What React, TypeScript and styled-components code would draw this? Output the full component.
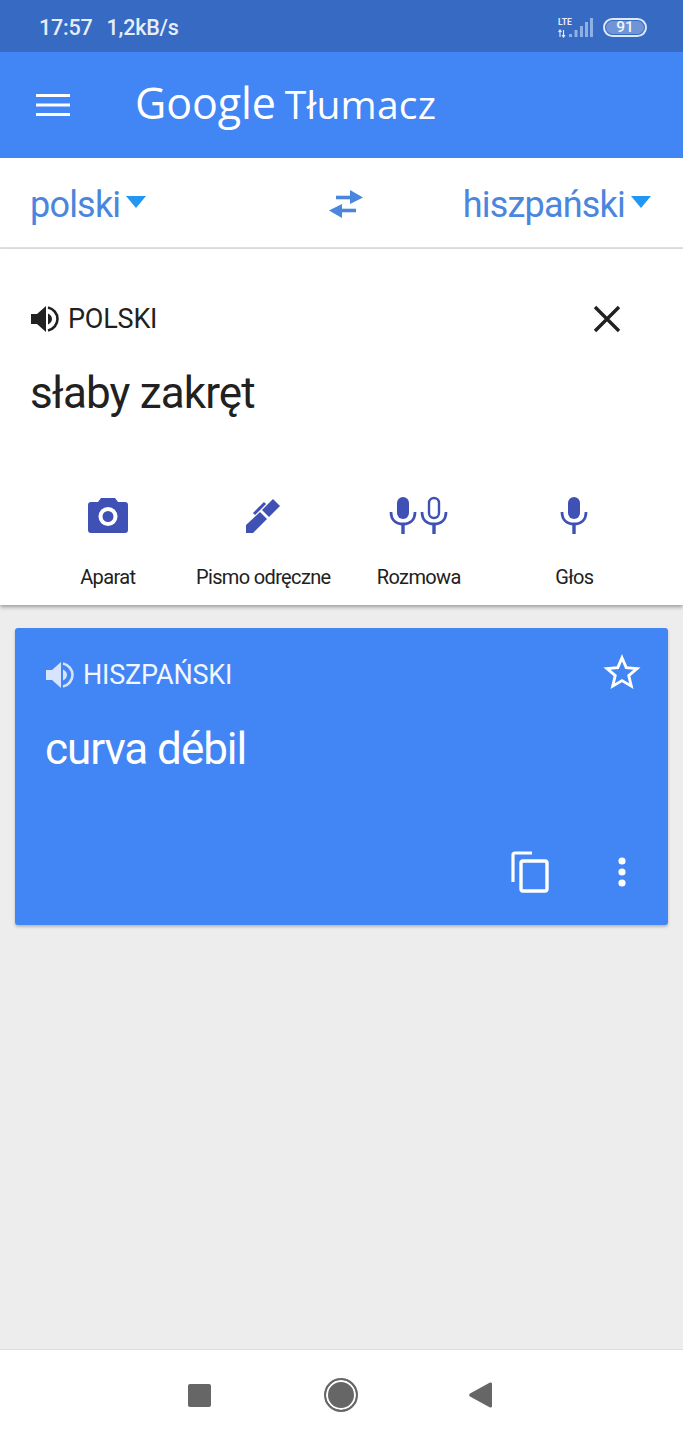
import React from "react";
import styled, { createGlobalStyle } from "styled-components";

const Global = createGlobalStyle`
  html, body { margin: 0; padding: 0; background: #ededed; }
  * { box-sizing: border-box; }
  body { font-family: Roboto, "Noto Sans", sans-serif; }
`;

const Page = styled.div`
  width: 683px;
  height: 1440px;
  display: flex;
  flex-direction: column;
  background: #ededed;
  overflow: hidden;
`;

const StatusBar = styled.div`
  height: 52px;
  flex: none;
  background: #366ac3;
  display: flex;
  align-items: center;
  justify-content: space-between;
  padding: 3px 36px 0 39px;
  color: #e6edf8;
`;

const StatusText = styled.div`
  display: flex;
  gap: 14px;
  font-size: 21.5px;
  font-weight: 500;
  letter-spacing: -0.2px;
`;

const StatusIcons = styled.div`
  display: flex;
  align-items: center;
  gap: 10px;
`;

const Battery = styled.div`
  width: 44px;
  height: 19px;
  border: 2px solid #dfe8f7;
  border-radius: 10px;
  padding: 1px;
  display: flex;
`;

const BatteryFill = styled.div`
  flex: 1;
  background: #6f95d6;
  border-radius: 7px;
  font-size: 15.5px;
  font-weight: 500;
  line-height: 13px;
  text-align: center;
  color: #f1f5fc;
`;

const AppBar = styled.header`
  height: 106px;
  flex: none;
  background: #4285f4;
  display: flex;
  align-items: center;
  padding: 0 0 0 36px;
  color: #fff;
`;

const Brand = styled.div`
  margin: -6px 0 0 65px;
  display: flex;
  align-items: baseline;
  gap: 9px;
`;

const BrandGoogle = styled.span`
  font-family: "Open Sans", sans-serif;
  font-size: 43px;
  font-weight: 500;
  letter-spacing: -0.1px;
  line-height: 1;
`;

const BrandName = styled.span`
  font-family: "Open Sans", sans-serif;
  font-size: 39px;
  font-weight: 500;
  letter-spacing: 0.2px;
  line-height: 1;
`;

const LangBar = styled.div`
  height: 91px;
  flex: none;
  background: #fff;
  border-bottom: 2px solid #e2e2e2;
  display: grid;
  grid-template-columns: 1fr auto 1fr;
  align-items: center;
  padding: 4px 32px 0 30px;
`;

const LangButton = styled.div<{ $end?: boolean }>`
  display: flex;
  align-items: center;
  gap: 6px;
  justify-content: ${(p) => (p.$end ? "flex-end" : "flex-start")};
  color: #4a86dd;
  font-size: 36px;
  letter-spacing: -0.8px;
`;

const Caret = styled.span`
  width: 0;
  height: 0;
  border-left: 10px solid transparent;
  border-right: 10px solid transparent;
  border-top: 12px solid #2196f3;
  margin-bottom: 6px;
`;

const SwapIcon = styled.svg`
  margin: -2px 0 0 10px;
`;

const InputPanel = styled.section`
  flex: none;
  height: 356px;
  background: #fff;
  box-shadow: 0 2px 4px rgba(0, 0, 0, 0.35);
  display: flex;
  flex-direction: column;
  padding: 0 0 0 30px;
`;

const LabelRow = styled.div`
  display: flex;
  align-items: center;
  justify-content: space-between;
  padding: 49px 62px 0 0;
  height: 90px;
`;

const LabelLeft = styled.div<{ $light?: boolean }>`
  display: flex;
  align-items: center;
  gap: 8px;
  font-size: 27px;
  color: ${(p) => (p.$light ? "#f2f6fe" : "#212121")};
  letter-spacing: -0.2px;
`;

const SourceText = styled.div`
  font-size: 44px;
  letter-spacing: -0.85px;
  color: #212121;
  margin-top: 28px;
  line-height: 52px;
  height: 52px;
`;

const Tools = styled.div`
  display: grid;
  grid-template-columns: repeat(4, 155.5px);
  margin: 74px 0 0 0;
`;

const Tool = styled.div`
  display: flex;
  flex-direction: column;
  align-items: center;
  color: #212121;
  font-size: 20px;
  letter-spacing: -0.65px;
`;

const ToolIcon = styled.div`
  height: 44px;
  display: flex;
  align-items: center;
  justify-content: center;
  gap: 3px;
  margin-bottom: 28px;
`;

const Card = styled.section`
  flex: none;
  margin: 23px 15px 0;
  height: 297px;
  background: #4285f4;
  border-radius: 3px;
  box-shadow: 0 2px 3px rgba(0, 0, 0, 0.22);
  color: #fff;
  display: flex;
  flex-direction: column;
  padding: 0 28px 0 30px;
`;

const CardHead = styled.div`
  display: flex;
  align-items: center;
  justify-content: space-between;
  height: 94px;
`;

const StarIcon = styled.svg`
  margin: -6px -1px 0 0;
`;

const TargetText = styled.div`
  font-size: 44px;
  letter-spacing: -1.05px;
  line-height: 48px;
  margin-top: 3px;
`;

const CardActions = styled.div`
  margin-top: auto;
  display: flex;
  justify-content: flex-end;
  align-items: center;
  gap: 67px;
  padding: 0 12px 32px 0;
`;

const Spacer = styled.div`
  flex: 1;
`;

const NavBar = styled.nav`
  height: 91px;
  flex: none;
  background: #fff;
  border-top: 1px solid #dedede;
  display: flex;
  align-items: center;
  justify-content: center;
  gap: 113px;
  padding: 0 3px 0 0;
`;

const NavSquare = styled.span`
  width: 23px;
  height: 23px;
  background: #666666;
  border-radius: 2px;
`;

const NavCircle = styled.span`
  width: 34px;
  height: 34px;
  border-radius: 50%;
  background: #666666;
  border: 2px solid #666666;
  box-shadow: inset 0 0 0 2px #fff;
`;

const NavBack = styled.svg`
  margin-left: -2px;
`;

const Speaker = ({ color, wave }: { color: string; wave: string }) => (
  <svg width="30" height="28" viewBox="0 0 30 28">
    <path d="M1 9h6l9-8v26l-9-8H1z" fill={color} />
    <path d="M18 8.500c2.400 1 4 3 4 5.500s-1.600 4.500-4 5.500z" fill={wave} />
    <path d="M18 2.500c5.500 1.200 9.500 6 9.500 11.500s-4 10.300-9.500 11.500" fill="none" stroke={wave} strokeWidth="2.600" />
  </svg>
);

const Mic = ({ filled }: { filled: boolean }) => (
  <svg width="28" height="38" viewBox="0 0 28 38">
    <rect
      x={filled ? 8 : 9}
      y={filled ? 1 : 2}
      width={filled ? 12 : 10}
      height={filled ? 22 : 20}
      rx={filled ? 6 : 5}
      fill={filled ? "#3f51b5" : "none"}
      stroke="#3f51b5"
      strokeWidth={filled ? 0 : 2.4}
    />
    <path d="M2 16c0 8 5 12 12 12s12-4 12-12" fill="none" stroke="#3f51b5" strokeWidth="2.800" />
    <path d="M14 27v11" stroke="#3f51b5" strokeWidth="3.400" />
  </svg>
);

export default function App() {
  return (
    <Page>
      <Global />
      <StatusBar>
        <StatusText>
          <span>17:57</span>
          <span>1,2kB/s</span>
        </StatusText>
        <StatusIcons>
          <svg width="36" height="24" viewBox="0 0 36 24">
            <text x="1" y="9" fontSize="8.500" fontWeight="700" fontFamily="Roboto" fill="#e6edf8">LTE</text>
            <path d="M3 14v7M1.500 16l1.500-2 1.500 2M6.500 21v-7M5 19l1.500 2 1.500-2" stroke="#e6edf8" strokeWidth="1.100" fill="none" />
            <rect x="12" y="18" width="3" height="3" fill="#8fb0e4" />
            <rect x="17.500" y="14" width="3" height="7" fill="#8fb0e4" />
            <rect x="23" y="10" width="3" height="11" fill="#8fb0e4" />
            <rect x="28" y="6" width="3" height="15" fill="#8fb0e4" />
            <rect x="33" y="2" width="3" height="19" fill="#8fb0e4" />
          </svg>
          <Battery>
            <BatteryFill>91</BatteryFill>
          </Battery>
        </StatusIcons>
      </StatusBar>
      <AppBar>
        <svg width="34" height="24" viewBox="0 0 34 24">
          <path d="M0 2.500h34M0 12h34M0 21.500h34" stroke="#fff" strokeWidth="3.200" />
        </svg>
        <Brand>
          <BrandGoogle>Google</BrandGoogle>
          <BrandName>Tłumacz</BrandName>
        </Brand>
      </AppBar>
      <LangBar>
        <LangButton>
          polski
          <Caret />
        </LangButton>
        <SwapIcon width="34" height="28" viewBox="0 0 34 28">
          <path d="M7 7.500h15" stroke="#4a86dd" strokeWidth="3.600" />
          <path d="M21 0l13 7.500L21 14z" fill="#4a86dd" />
          <path d="M12 20.500h15" stroke="#4a86dd" strokeWidth="3.600" />
          <path d="M13 14L0 20.500 13 28z" fill="#4a86dd" />
        </SwapIcon>
        <LangButton $end>
          hiszpański
          <Caret />
        </LangButton>
      </LangBar>
      <InputPanel>
        <LabelRow>
          <LabelLeft>
            <Speaker color="#212121" wave="#212121" />
            POLSKI
          </LabelLeft>
          <svg width="28" height="28" viewBox="0 0 28 28">
            <path d="M2 2l24 24M26 2L2 26" stroke="#212121" strokeWidth="3.400" />
          </svg>
        </LabelRow>
        <SourceText>słaby zakręt</SourceText>
        <Tools>
          <Tool>
            <ToolIcon>
              <svg width="40" height="36" viewBox="0 0 40 36">
                <path
                  fillRule="evenodd"
                  d="M13 1h14l3 4h7a3 3 0 0 1 3 3v25a3 3 0 0 1-3 3H3a3 3 0 0 1-3-3V8a3 3 0 0 1 3-3h7zM20 10a9.500 9.500 0 1 0 0 19a9.500 9.500 0 0 0 0-19zM20 14a5.500 5.500 0 1 1 0 11a5.500 5.500 0 0 1 0-11z"
                  fill="#3f51b5"
                />
              </svg>
            </ToolIcon>
            Aparat
          </Tool>
          <Tool>
            <ToolIcon>
              <svg width="36" height="36" viewBox="0 0 36 36">
                <path d="M1 28L15 15l7 7L8 36H1z" fill="#3f51b5" />
                <path d="M17 13L28 2l7 7-11 11z" fill="#3f51b5" />
                <path d="M9 17L20 6" stroke="#3f51b5" strokeWidth="3" />
              </svg>
            </ToolIcon>
            Pismo odręczne
          </Tool>
          <Tool>
            <ToolIcon>
              <Mic filled />
              <Mic filled={false} />
            </ToolIcon>
            Rozmowa
          </Tool>
          <Tool>
            <ToolIcon>
              <Mic filled />
            </ToolIcon>
            Głos
          </Tool>
        </Tools>
      </InputPanel>
      <Card>
        <CardHead>
          <LabelLeft $light>
            <Speaker color="#d7e4fb" wave="#d7e4fb" />
            HISZPAŃSKI
          </LabelLeft>
          <StarIcon width="38" height="36" viewBox="0 0 24 24">
            <path
              d="M12 2.500l2.800 6.600 7.200.6-5.500 4.700 1.700 7L12 17.700 5.800 21.400l1.700-7L2 9.700l7.200-.6z"
              fill="none"
              stroke="#fff"
              strokeWidth="1.900"
            />
          </StarIcon>
        </CardHead>
        <TargetText>curva débil</TargetText>
        <CardActions>
          <svg width="38" height="42" viewBox="0 0 38 42">
            <path d="M21 2H4a2 2 0 0 0-2 2v27" fill="none" stroke="#fff" strokeWidth="3.200" />
            <rect x="10" y="10" width="26" height="30" rx="2" fill="none" stroke="#fff" strokeWidth="3.400" />
          </svg>
          <svg width="12" height="32" viewBox="0 0 12 32">
            <circle cx="6" cy="5" r="3.600" fill="#fff" />
            <circle cx="6" cy="16" r="3.600" fill="#fff" />
            <circle cx="6" cy="27" r="3.600" fill="#fff" />
          </svg>
        </CardActions>
      </Card>
      <Spacer />
      <NavBar>
        <NavSquare />
        <NavCircle />
        <NavBack width="23" height="26" viewBox="0 0 23 26">
          <path d="M21 0.500a1.500 1.500 0 0 1 2 1.500v22a1.500 1.500 0 0 1-2 1.500L1 14.500a2 2 0 0 1 0-3z" fill="#666666" />
        </NavBack>
      </NavBar>
    </Page>
  );
}
